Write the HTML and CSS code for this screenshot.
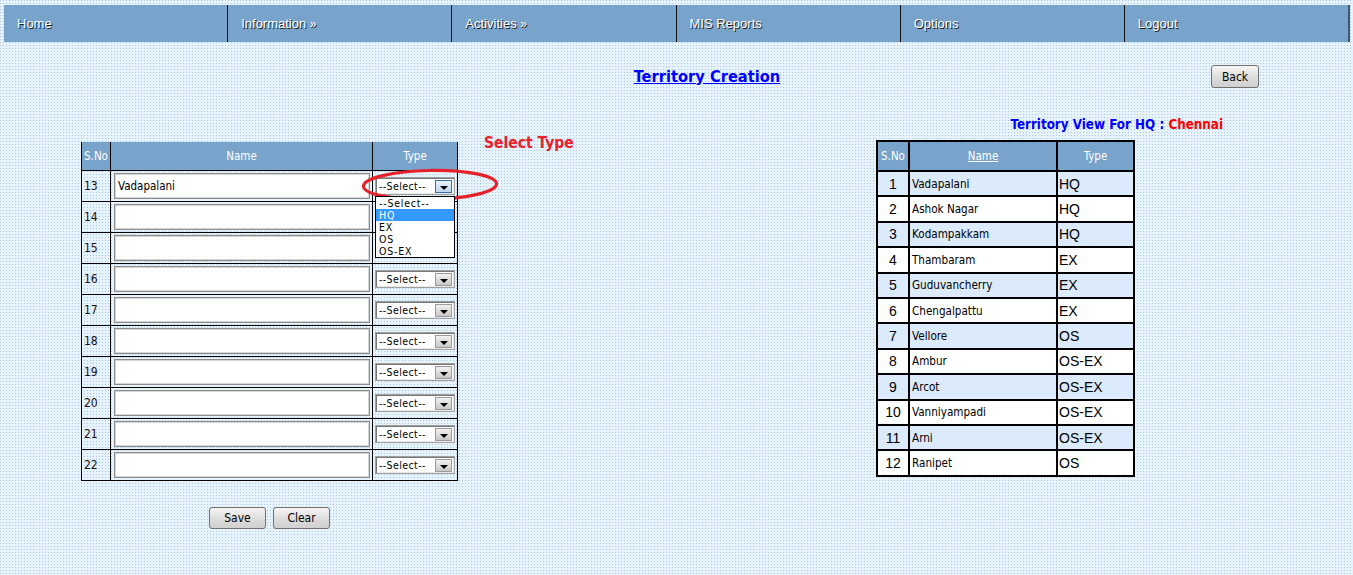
FILE: index.html
```html
<!DOCTYPE html>
<html>
<head>
<meta charset="utf-8">
<title>Territory Creation</title>
<link rel="stylesheet" href="styles.css">
</head>
<body>
<nav class="menu">
  <a class="menu-item">Home</a>
  <a class="menu-item">Information <span class="raq">&raquo;</span></a>
  <a class="menu-item">Activities <span class="raq">&raquo;</span></a>
  <a class="menu-item">MIS Reports</a>
  <a class="menu-item">Options</a>
  <a class="menu-item">Logout</a>
</nav>

<div class="titlebar">
  <div class="title"><a class="title-link">Territory Creation</a></div>
  <button class="btn btn-back">Back</button>
</div>

<div class="content">
  <div class="left-col">
    <table class="entry">
      <thead>
        <tr><th class="c-sno">S.No</th><th class="c-name">Name</th><th class="c-type">Type</th></tr>
      </thead>
      <tbody>
        <tr>
          <td class="num">13</td>
          <td class="namecell"><div class="txt">Vadapalani</div></td>
          <td class="typecell open">
            <div class="sel focus"><span class="sel-text">--Select--</span><span class="arrow"><i class="tri"></i></span></div>
            <svg class="ring" width="138" height="34" viewBox="0 0 138 34"><ellipse cx="69" cy="17" rx="66.5" ry="14.5" fill="none" stroke="#e52129" stroke-width="3.2" transform="rotate(-1 69 17)"/></svg>
            <ul class="dd">
              <li>--Select--</li>
              <li class="hl">HQ</li>
              <li>EX</li>
              <li>OS</li>
              <li>OS-EX</li>
            </ul>
          </td>
        </tr>
        <tr><td class="num">14</td><td class="namecell"><div class="txt"></div></td><td class="typecell"></td></tr>
        <tr><td class="num">15</td><td class="namecell"><div class="txt"></div></td><td class="typecell"></td></tr>
        <tr><td class="num">16</td><td class="namecell"><div class="txt"></div></td><td class="typecell"><div class="sel"><span class="sel-text">--Select--</span><span class="arrow"><i class="tri"></i></span></div></td></tr>
        <tr><td class="num">17</td><td class="namecell"><div class="txt"></div></td><td class="typecell"><div class="sel"><span class="sel-text">--Select--</span><span class="arrow"><i class="tri"></i></span></div></td></tr>
        <tr><td class="num">18</td><td class="namecell"><div class="txt"></div></td><td class="typecell"><div class="sel"><span class="sel-text">--Select--</span><span class="arrow"><i class="tri"></i></span></div></td></tr>
        <tr><td class="num">19</td><td class="namecell"><div class="txt"></div></td><td class="typecell"><div class="sel"><span class="sel-text">--Select--</span><span class="arrow"><i class="tri"></i></span></div></td></tr>
        <tr><td class="num">20</td><td class="namecell"><div class="txt"></div></td><td class="typecell"><div class="sel"><span class="sel-text">--Select--</span><span class="arrow"><i class="tri"></i></span></div></td></tr>
        <tr><td class="num">21</td><td class="namecell"><div class="txt"></div></td><td class="typecell"><div class="sel"><span class="sel-text">--Select--</span><span class="arrow"><i class="tri"></i></span></div></td></tr>
        <tr><td class="num">22</td><td class="namecell"><div class="txt"></div></td><td class="typecell"><div class="sel"><span class="sel-text">--Select--</span><span class="arrow"><i class="tri"></i></span></div></td></tr>
      </tbody>
    </table>
    <div class="actions">
      <button class="btn btn-act">Save</button>
      <button class="btn btn-act">Clear</button>
    </div>
  </div>

  <div class="hint">Select Type</div>

  <div class="right-col">
    <div class="caption">Territory View For HQ : <span class="red">Chennai</span></div>
    <table class="view">
      <thead>
        <tr><th class="v-sno">S.No</th><th class="v-name"><a class="hlink">Name</a></th><th class="v-type">Type</th></tr>
      </thead>
      <tbody>
        <tr class="alt"><td class="vn">1</td><td class="vname">Vadapalani</td><td class="vtype">HQ</td></tr>
        <tr><td class="vn">2</td><td class="vname">Ashok Nagar</td><td class="vtype">HQ</td></tr>
        <tr class="alt"><td class="vn">3</td><td class="vname">Kodampakkam</td><td class="vtype">HQ</td></tr>
        <tr><td class="vn">4</td><td class="vname">Thambaram</td><td class="vtype">EX</td></tr>
        <tr class="alt"><td class="vn">5</td><td class="vname">Guduvancherry</td><td class="vtype">EX</td></tr>
        <tr><td class="vn">6</td><td class="vname">Chengalpattu</td><td class="vtype">EX</td></tr>
        <tr class="alt"><td class="vn">7</td><td class="vname">Vellore</td><td class="vtype">OS</td></tr>
        <tr><td class="vn">8</td><td class="vname">Ambur</td><td class="vtype">OS-EX</td></tr>
        <tr class="alt"><td class="vn">9</td><td class="vname">Arcot</td><td class="vtype">OS-EX</td></tr>
        <tr><td class="vn">10</td><td class="vname">Vanniyampadi</td><td class="vtype">OS-EX</td></tr>
        <tr class="alt"><td class="vn">11</td><td class="vname">Arni</td><td class="vtype">OS-EX</td></tr>
        <tr><td class="vn">12</td><td class="vname">Ranipet</td><td class="vtype">OS</td></tr>
      </tbody>
    </table>
  </div>
</div>
</body>
</html>
```

FILE: styles.css
```css
html, body {
  margin: 0;
  padding: 0;
}
body {
  width: 1353px;
  height: 575px;
  overflow: hidden;
  background-color: #a9c6e2;
  background-image:
    linear-gradient(90deg, transparent 1px, #e6f2fc 1px),
    linear-gradient(180deg, transparent 1px, #e6f2fc 1px);
  background-size: 3px 3px, 3px 3px;
  font-family: Tahoma, "DejaVu Sans Condensed", "DejaVu Sans", sans-serif;
  font-size: 11px;
  color: #000;
}

/* menu */
.menu {
  display: flex;
  margin: 5px 3px 0 4px;
  height: 37px;
  background: #78a3cb;
}
.menu-item {
  flex: 1 1 0;
  box-sizing: border-box;
  border-right: 1px solid #111;
  padding-left: 13px;
  line-height: 37px;
  font-family: "Liberation Sans", Arial, sans-serif;
  font-size: 13px;
  color: #fff;
  text-shadow: 1px 1px 0 #1a1a1a;
  white-space: nowrap;
}
.menu-item:last-child {
  border-right: 2px solid #3d5670;
}
.raq {
  font-size: 12px;
}

/* title bar */
.titlebar {
  display: flex;
  align-items: center;
  margin-top: 23px;
  padding-right: 94px;
  height: 23px;
}
.title {
  flex: 1;
  padding-left: 203px;
  text-align: center;
  line-height: 23px;
  padding-top: 1px;
}
.title-link {
  font-family: "DejaVu Sans Condensed", "DejaVu Sans", sans-serif;
  font-weight: bold;
  font-size: 16.3px;
  color: #0000ff;
  text-decoration: underline;
}

.btn {
  box-sizing: border-box;
  border: 1px solid #707070;
  border-radius: 3px;
  background: linear-gradient(#f6f6f6, #dedede 50%, #d0d0d0);
  font-family: "DejaVu Sans Condensed", "DejaVu Sans", sans-serif;
  font-size: 12px;
  color: #000;
  padding: 0;
}
.btn-back {
  width: 48px;
  height: 23px;
}

/* content */
.content {
  display: flex;
  align-items: flex-start;
  padding-left: 81px;
  padding-right: 130px;
}
.left-col {
  padding-top: 54px;
  width: 377px;
}
.hint {
  margin-top: 45px;
  margin-left: 26px;
  line-height: 20px;
  font-family: "DejaVu Sans Condensed", "DejaVu Sans", sans-serif;
  font-weight: bold;
  font-size: 15.5px;
  color: #e8202a;
}
.right-col {
  margin-left: auto;
  width: 347px;
  padding-top: 29px;
}
.caption {
  text-align: right;
  line-height: 16px;
  font-family: "DejaVu Sans Condensed", "DejaVu Sans", sans-serif;
  font-weight: bold;
  font-size: 13.3px;
  color: #0000ff;
}
.red {
  color: #ff0000;
}

/* entry table */
.entry {
  border-collapse: collapse;
  width: 377px;
  table-layout: fixed;
}
.entry th {
  background: #78a3cb;
  color: #fff;
  font-weight: normal;
  font-size: 11.5px;
  height: 28px;
  padding: 0;
  border: 1px solid #000;
  border-top: none;
}
.entry th.c-sno { width: 28px; }
.entry th.c-name { width: 261px; }
.entry th.c-type { width: 84px; }
.entry td {
  border: 1px solid #000;
  height: 30px;
  padding: 0;
  vertical-align: middle;
}
.entry td.num {
  padding-left: 2px;
  font-size: 12px;
  color: #1a1010;
}
.namecell {
  padding: 0 2px !important;
}
.txt {
  box-sizing: border-box;
  height: 26px;
  width: 256px;
  margin-left: 1px;
  border: 1px solid #8c8c8c;
  box-shadow: inset 0 0 0 1px #d6d6d6;
  background: #fff;
  padding-left: 3px;
  line-height: 24px;
  font-size: 11.5px;
}
.typecell {
  position: relative;
  padding-left: 2px !important;
}
.sel {
  box-sizing: border-box;
  display: flex;
  align-items: center;
  justify-content: space-between;
  width: 80px;
  height: 18px;
  border: 1px solid #a0a0a0;
  box-shadow: inset 1px 1px 0 #777, inset -1px -1px 0 #e8e8e8;
  background: #fff;
  padding: 0 2px 0 3px;
}
.sel-text {
  font-size: 10.5px;
  letter-spacing: 0.4px;
}
.arrow {
  box-sizing: border-box;
  width: 17px;
  height: 13px;
  border: 1px solid #9a9a9a;
  background: linear-gradient(#f2f2f2, #c8c8c8);
  display: flex;
  align-items: flex-end;
  justify-content: center;
  padding-bottom: 2px;
}
.sel.focus .arrow {
  border-color: #3a6ea5;
  background: linear-gradient(#eaf4fd, #bcd6ef);
}
.tri {
  width: 0;
  height: 0;
  border-left: 4px solid transparent;
  border-right: 4px solid transparent;
  border-top: 4px solid #000;
}
.ring {
  position: absolute;
  left: -12px;
  top: -3px;
  pointer-events: none;
}
.dd {
  position: absolute;
  left: 2px;
  top: 25px;
  width: 80px;
  box-sizing: border-box;
  margin: 0;
  padding: 0;
  list-style: none;
  border: 1px solid #000;
  background: #fff;
  z-index: 2;
}
.dd li {
  height: 12px;
  line-height: 12px;
  padding-left: 3px;
  font-size: 10.5px;
  letter-spacing: 0.8px;
}
.dd li.hl {
  background: #3399ff;
  color: #fff;
}

.actions {
  display: flex;
  justify-content: center;
  gap: 7px;
  margin-top: 26px;
}
.btn-act {
  width: 57px;
  height: 22px;
}

/* view table */
.view {
  margin-top: 7px;
  border-collapse: collapse;
  table-layout: fixed;
  width: 257px;
}
.view th {
  background: #78a3cb;
  color: #fff;
  font-weight: normal;
  font-size: 11.5px;
  height: 28px;
  padding: 0;
  border: 2px solid #000;
}
.view th.v-sno { width: 30px; }
.view th.v-name { width: 146px; }
.view th.v-type { width: 75px; }
.hlink {
  color: #fff;
  text-decoration: underline;
}
.view td {
  border: 2px solid #000;
  height: 23.4px;
  padding: 0;
  background: #fff;
}
.view tr.alt td {
  background: #dcebfb;
}
.vn {
  text-align: center;
  font-family: "Liberation Sans", Arial, sans-serif;
  font-size: 14px;
}
.vname {
  padding-left: 2px !important;
  font-size: 11.6px;
}
.vtype {
  padding-left: 1px !important;
  font-family: "Liberation Sans", Arial, sans-serif;
  font-size: 14px;
}
```
